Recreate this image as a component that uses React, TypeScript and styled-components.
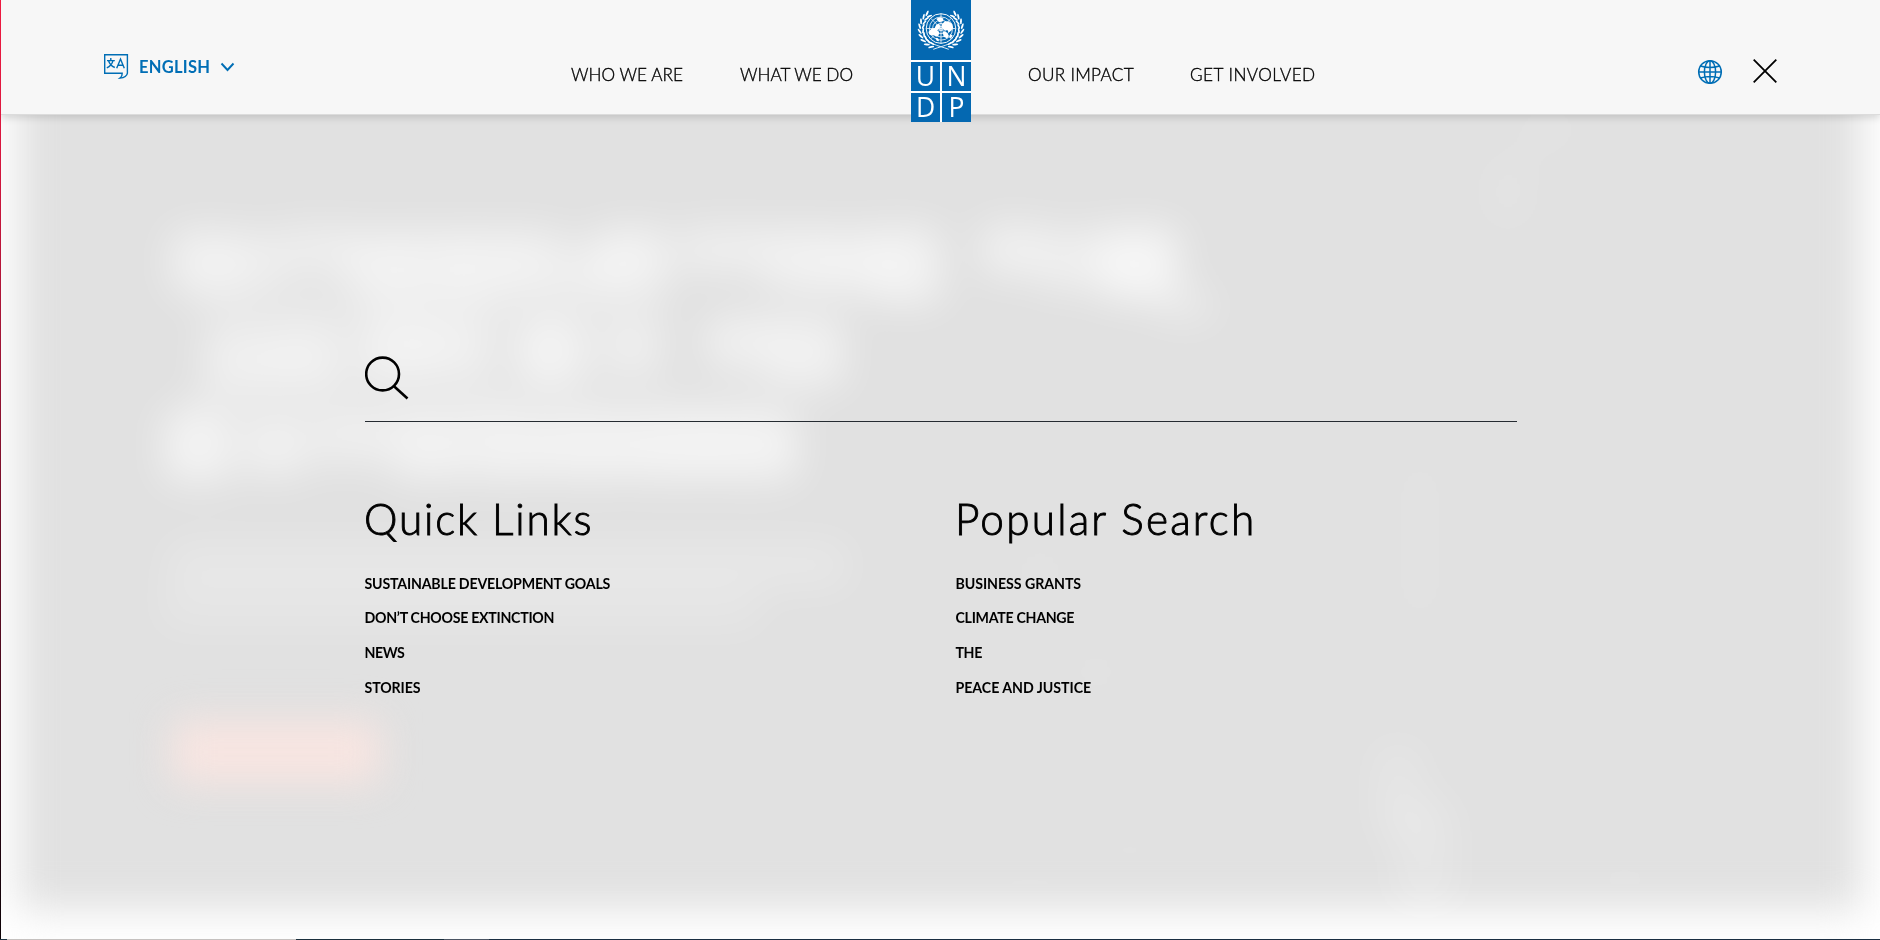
import React from "react";
import styled, { createGlobalStyle } from "styled-components";

const GlobalStyle = createGlobalStyle`
  *, *::before, *::after { box-sizing: border-box; }
  body { margin: 0; background: #fff; font-family: Lato, "Liberation Sans", sans-serif; }
`;

const Page = styled.div`
  width: 1880px;
  height: 940px;
  padding: 0 0 1px 1px;
  overflow: hidden;
  background:
    linear-gradient(90deg, #1d3340 7px, #c5c1bf 7px 276px, #c5c1bf 296px, #1b303d 296px 444px, #4b5563 444px 489px, #1b2f42 489px) 0 100% / 100% 1px no-repeat,
    linear-gradient(180deg, #ee1a40 0, #d9173f 150px, #a81638 320px, #6d0f28 540px, #2b0614 790px, #0c0206 940px);
`;

const Overlay = styled.div`
  position: relative;
  display: flex;
  flex-direction: column;
  height: 939px;
  overflow: hidden;
  background: #fff;
`;

const Backdrop = styled.svg`
  position: absolute;
  top: 0;
  left: 0;
`;

const Header = styled.header`
  position: relative;
  display: grid;
  grid-template-columns: 467px 1fr auto;
  height: 115px;
  flex: none;
  padding: 0 103px 0 102px;
  background: #f7f7f7;
  border-bottom: 1px solid #dcdcdc;
  box-shadow: 0 3px 7px rgba(0, 0, 0, 0.13);
`;

const Language = styled.button`
  display: flex;
  align-items: flex-start;
  height: 28px;
  margin: 53px 0 0;
  padding: 0;
  border: 0;
  background: none;
  color: #006eb5;
  font: 700 16.5px/28px Lato, sans-serif;
  letter-spacing: 0.25px;
`;

const LanguageLabel = styled.span`
  margin: 0 10px 0 10px;
`;

const Chevron = styled.svg`
  margin-top: 9px;
`;

const Nav = styled.nav`
  display: flex;
  align-items: flex-start;
  padding-left: 1px;
`;

const NavLink = styled.a<{ $width: number; $tracking: number }>`
  width: ${(p) => p.$width}px;
  margin-top: 62.5px;
  color: #000;
  font-size: 17.2px;
  font-weight: 300;
  line-height: 24px;
  letter-spacing: ${(p) => p.$tracking}px;
  white-space: nowrap;
  -webkit-text-stroke: 0.35px #000;
`;

const Logo = styled.div`
  display: grid;
  grid-template-columns: 29px 29px;
  grid-template-rows: 60px 29px 29px;
  gap: 2px;
  width: 60px;
  height: 122px;
  margin-right: 57px;
  background: #fff;
`;

const Emblem = styled.div`
  grid-column: span 2;
  background: #0468b1;
`;

const LogoLetter = styled.div`
  display: flex;
  align-items: center;
  justify-content: center;
  background: #0468b1;
  color: #fff;
  font: 400 26.5px/29px "Open Sans", "Noto Sans", sans-serif;
`;

const Tools = styled.div`
  display: flex;
  align-items: flex-start;
  gap: 30px;
`;

const GlobeIcon = styled.svg`
  margin-top: 59px;
`;

const CloseIcon = styled.svg`
  margin-top: 59px;
`;

const SearchPanel = styled.main`
  position: relative;
  width: 1152px;
  margin: 241px 0 0 364px;
`;

const SearchField = styled.div`
  height: 66px;
  border-bottom: 1px solid #252b31;
`;

const Columns = styled.div`
  display: grid;
  grid-template-columns: 591px 1fr;
`;

const Title = styled.h2<{ $tracking: number }>`
  margin: 69px 0 0 -1px;
  font-size: 42.3px;
  font-weight: 300;
  line-height: 56px;
  letter-spacing: ${(p) => p.$tracking}px;
  color: #000;
  -webkit-text-stroke: 0.9px #000;
`;

const LinkList = styled.ul`
  margin: 19.5px 0 0 -0.5px;
  padding: 0;
  list-style: none;
`;

const LinkItem = styled.li<{ $tracking: number }>`
  height: 34.7px;
  color: #000;
  font-size: 14.2px;
  font-weight: 700;
  line-height: 34px;
  letter-spacing: ${(p) => p.$tracking}px;
`;

type Blob = [cx: number, cy: number, rx: number, ry: number, opacity: number];

const heroBlobs: Blob[] = [
  [205, 262, 34, 32, 0.62], [258, 260, 26, 28, 0.5], [318, 250, 36, 24, 0.5], [375, 263, 28, 32, 0.62],
  [430, 262, 34, 32, 0.6], [490, 262, 34, 32, 0.62], [540, 262, 24, 32, 0.55], [632, 260, 36, 32, 0.66],
  [585, 270, 26, 28, 0.45], [725, 250, 46, 24, 0.52], [800, 260, 34, 32, 0.6], [855, 262, 30, 32, 0.6],
  [907, 266, 34, 38, 0.66], [1012, 250, 32, 26, 0.58], [1075, 260, 36, 30, 0.52], [1140, 264, 38, 36, 0.78],
  [1186, 306, 28, 16, 0.36],
  [240, 358, 36, 32, 0.56], [308, 356, 36, 32, 0.6], [395, 350, 38, 32, 0.64], [460, 350, 34, 30, 0.58],
  [550, 352, 36, 34, 0.68], [632, 348, 32, 30, 0.5], [740, 342, 36, 28, 0.55], [806, 352, 38, 36, 0.6],
  [350, 305, 150, 16, 0.26], [520, 305, 150, 16, 0.22], [350, 400, 160, 12, 0.26], [620, 400, 160, 10, 0.22],
  [198, 446, 34, 36, 0.68], [275, 446, 32, 30, 0.6], [352, 438, 40, 26, 0.52], [430, 446, 38, 34, 0.64],
  [510, 446, 40, 34, 0.64], [590, 446, 40, 34, 0.66], [670, 446, 40, 34, 0.68], [752, 446, 46, 34, 0.68],
];

const faintBlobs: Blob[] = [
  [508, 565, 340, 24, 0.21], [460, 608, 300, 22, 0.16],
  [1508, 192, 22, 34, 0.1], [1548, 130, 30, 22, 0.07],
  [1040, 572, 30, 30, 0.05], [1096, 672, 28, 28, 0.05],
  [1420, 540, 14, 80, 0.09], [1398, 790, 24, 46, 0.16], [1425, 860, 30, 60, 0.18],
  [1130, 850, 20, 36, 0.05], [1030, 890, 50, 20, 0.05], [1625, 880, 40, 14, 0.07],
];

function HeroBackdrop() {
  return (
    <Backdrop width="1879" height="939" viewBox="1 0 1879 939" aria-hidden="true">
      <defs>
        <filter id="edge" filterUnits="userSpaceOnUse" x="-100" y="-100" width="2080" height="1200" colorInterpolationFilters="sRGB">
          <feGaussianBlur stdDeviation="19 20" />
        </filter>
        <filter id="soft" filterUnits="userSpaceOnUse" x="0" y="0" width="1880" height="940" colorInterpolationFilters="sRGB">
          <feGaussianBlur stdDeviation="19" />
        </filter>
      </defs>
      <rect x="18" y="-60" width="1844" height="970" fill="#e1e1e1" filter="url(#edge)" />
      <g filter="url(#soft)" fill="#fff">
        {heroBlobs.map(([cx, cy, rx, ry, o], i) => (
          <rect key={i} x={cx - rx} y={cy - ry} width={rx * 2} height={ry * 2} rx="12" opacity={o * 0.88} />
        ))}
        {faintBlobs.map(([cx, cy, rx, ry, o], i) => (
          <rect key={i} x={cx - rx} y={cy - ry} width={rx * 2} height={ry * 2} rx="12" opacity={o} />
        ))}
        <rect x="172" y="721" width="208" height="62" rx="8" fill="#f8e5e1" />
      </g>
    </Backdrop>
  );
}

function TranslateIcon() {
  return (
    <svg width="26" height="27" viewBox="0 0 26 27" fill="none" stroke="currentColor" strokeWidth="1.4">
      <path d="M1.700 1.700h22.700v18.500c-.4 2.700-3 4.600-7.400 4.900 1.800-1.300 2.300-2.700 2.200-4.900H1.700z" />
      <path d="M7.8 5v2.400M4 7.600h7.800M9.900 7.800c-.7 3-2.700 5.500-6.100 7M5.600 7.800c.8 3 2.900 5.400 6.200 6.700" />
      <path d="M13.700 15.300 17.500 6l3.800 9.300M15 12.200h5" />
    </svg>
  );
}

function Laurel() {
  const leaves: [number, number, number][] = [
    [-9.5, 17.2, 8], [-13.5, 15, 28], [-16.8, 11.5, 46], [-19, 7.4, 62], [-20.2, 2.8, 78],
    [-20.2, -2, 94], [-19, -6.6, 110], [-16.6, -10.8, 124], [-13.4, -14, 138],
  ];
  return (
    <g fill="#fff">
      {leaves.map(([x, y, r], i) => (
        <g key={i} transform={`translate(${x} ${y}) rotate(${r})`}>
          <ellipse cx="-1" cy="1.6" rx="3.2" ry="1" transform="rotate(-22)" />
          <ellipse cx="-1" cy="-1.6" rx="2.9" ry=".9" transform="rotate(22)" />
        </g>
      ))}
      <path d="M8 21.5C-3 17-15.500 17-18.200 3" fill="none" stroke="#fff" strokeWidth=".9" />
    </g>
  );
}

function WorldEmblem() {
  return (
    <svg width="60" height="60" viewBox="-31 -29.500 62 62" aria-hidden="true">
      <g fill="none" stroke="#fff" strokeWidth=".8">
        <circle r="15.300" strokeWidth="1" />
        <circle r="12" />
        <circle r="8.700" />
        <circle r="5.300" />
        <circle r="2.200" />
        <path d="M-15.300 0h30.600M0-15.300v30.600M-10.800-10.800l21.600 21.600M10.800-10.800l-21.600 21.600" />
      </g>
      <g fill="#fff">
        <path d="M-13 3.500l3-3.200 3.500-.8 1.500-3.500 3-1 1.200 2.400-1 2.800-2 1.500 2 2.300-.8 3.500-2.500 1-2.200-1.800-2.600.4-2.200-1z" />
        <path d="M1-4.500l3-3 4 .2 3.500 2.600 1 3.700-1.700 3-2.800 2-1.500-2.500-3 .5L1-1z" />
        <path d="M-5-10l4-1.800 3.500 1.500-.5 2.800-4 1zM1.500 3l4 .5 2.500 3.500-1.500 3.200-3.700-1.700z" />
        <path d="M-5.500 9.500l2.500.5 1 3-2.500-.5zM9.500 6l2.500 1-1.500 3-1.800-.8z" />
      </g>
      <Laurel />
      <g transform="scale(-1 1)">
        <Laurel />
      </g>
    </svg>
  );
}

const quickLinks: [string, number][] = [
  ["SUSTAINABLE DEVELOPMENT GOALS", -0.2],
  ["DON’T CHOOSE EXTINCTION", -0.29],
  ["NEWS", -0.45],
  ["STORIES", -0.12],
];

const popularLinks: [string, number][] = [
  ["BUSINESS GRANTS", -0.06],
  ["CLIMATE CHANGE", -0.3],
  ["THE", -0.4],
  ["PEACE AND JUSTICE", -0.04],
];

function LinkColumn({ title, tracking, links }: { title: string; tracking: number; links: [string, number][] }) {
  return (
    <section>
      <Title $tracking={tracking}>{title}</Title>
      <LinkList>
        {links.map(([label, spacing]) => (
          <LinkItem key={label} $tracking={spacing}>{label}</LinkItem>
        ))}
      </LinkList>
    </section>
  );
}

export default function App() {
  return (
    <Page>
      <GlobalStyle />
      <Overlay>
        <HeroBackdrop />
        <Header>
          <Language>
            <TranslateIcon />
            <LanguageLabel>ENGLISH</LanguageLabel>
            <Chevron width="15" height="11" viewBox="0 0 15 11" fill="none" stroke="currentColor" strokeWidth="1.900">
              <path d="M1.500 1.500l6 6.500 6-6.500" />
            </Chevron>
          </Language>
          <Nav>
            <NavLink $width={169} $tracking={0.05}>WHO WE ARE</NavLink>
            <NavLink $width={171} $tracking={0}>WHAT WE DO</NavLink>
            <Logo>
              <Emblem><WorldEmblem /></Emblem>
              <LogoLetter>U</LogoLetter>
              <LogoLetter>N</LogoLetter>
              <LogoLetter>D</LogoLetter>
              <LogoLetter>P</LogoLetter>
            </Logo>
            <NavLink $width={162} $tracking={0.3}>OUR IMPACT</NavLink>
            <NavLink $width={126} $tracking={0.45}>GET INVOLVED</NavLink>
          </Nav>
          <Tools>
            <GlobeIcon width="26" height="26" viewBox="-13 -13 26 26" fill="none" stroke="#006eb5" strokeWidth="1.500">
              <circle r="11.300" />
              <ellipse rx="5.600" ry="11.300" />
              <path d="M0-11.300v22.600M-11.300 0h22.600M-9.600-6Q0-3 9.600-6M-9.600 6Q0 3 9.600 6" />
            </GlobeIcon>
            <CloseIcon width="24" height="24" viewBox="0 0 24 24" stroke="#000" strokeWidth="1.800">
              <path d="M.7.700l22.600 22.600M23.300.700.700 23.300" />
            </CloseIcon>
          </Tools>
        </Header>
        <SearchPanel>
          <SearchField>
            <svg width="44" height="44" viewBox="0 0 44 44" fill="none" stroke="#000" strokeWidth="2.600">
              <circle cx="17.600" cy="18" r="16.400" />
              <path d="M29 30.300 42.500 42.500" />
            </svg>
          </SearchField>
          <Columns>
            <LinkColumn title="Quick Links" tracking={1.8} links={quickLinks} />
            <LinkColumn title="Popular Search" tracking={2.2} links={popularLinks} />
          </Columns>
        </SearchPanel>
      </Overlay>
    </Page>
  );
}
